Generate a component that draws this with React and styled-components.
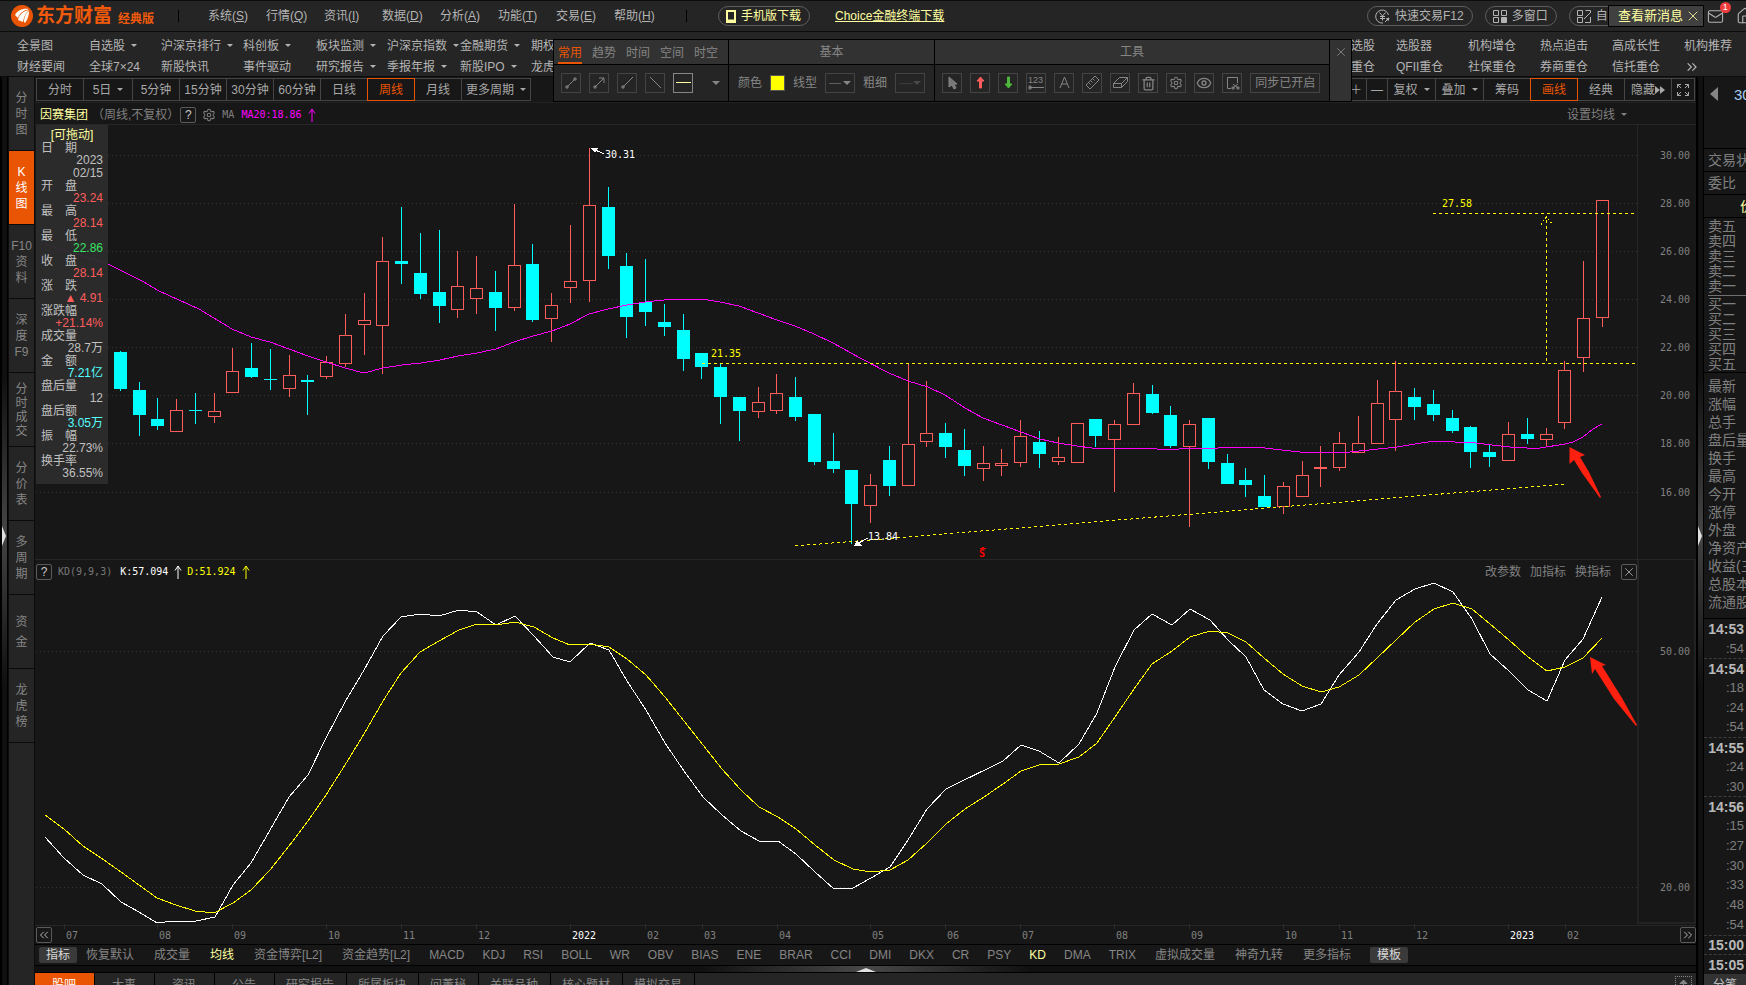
import React from 'react'
import styled, { createGlobalStyle } from 'styled-components'
import { Trash2, Settings, Eye, Mail, Home, X, ChevronsLeft, ChevronsRight } from 'lucide-react'

const menus = ['系统(S)', '行情(Q)', '资讯(I)', '数据(D)', '分析(A)', '功能(T)', '交易(E)', '帮助(H)']

const navLeft = [
  ['全景图', '自选股▾', '沪深京排行▾', '科创板▾', '板块监测▾', '沪深京指数▾', '金融期货▾', '期权'],
  ['财经要闻', '全球7×24', '新股快讯', '事件驱动', '研究报告▾', '季报年报▾', '新股IPO▾', '龙虎'],
]

const navRight = [
  ['选股', '选股器', '机构增仓', '热点追击', '高成长性', '机构推荐'],
  ['重仓', 'QFII重仓', '社保重仓', '券商重仓', '信托重仓', '>>'],
]

const sideTabs = [
  ['分', '时', '图'], ['K', '线', '图'], ['F10', '资', '料'], ['深', '度', 'F9'],
  ['分', '时', '成', '交'], ['分', '价', '表'], ['多', '周', '期'], ['资', '金'], ['龙', '虎', '榜'],
]

const periods = ['分时', '5日▾', '5分钟', '15分钟', '30分钟', '60分钟', '日线', '周线', '月线']

const info = [
  ['日期', '2023 02/15', '#c0c0c0'],
  ['开盘', '23.24', '#ff5c5c'],
  ['最高', '28.14', '#ff5c5c'],
  ['最低', '22.86', '#39e365'],
  ['收盘', '28.14', '#ff5c5c'],
  ['涨跌', '▲ 4.91', '#ff5c5c'],
  ['涨跌幅', '+21.14%', '#ff5c5c'],
  ['成交量', '28.7万', '#c0c0c0'],
  ['金额', '7.21亿', '#54ffff'],
  ['盘后量', '12', '#c0c0c0'],
  ['盘后额', '3.05万', '#54ffff'],
  ['振幅', '22.73%', '#c0c0c0'],
  ['换手率', '36.55%', '#c0c0c0'],
]

const indicators = [
  '恢复默认', '成交量', '均线', '资金博弈[L2]', '资金趋势[L2]', 'MACD', 'KDJ', 'RSI', 'BOLL', 'WR', 'OBV', 'BIAS',
  'ENE', 'BRAR', 'CCI', 'DMI', 'DKX', 'CR', 'PSY', 'KD', 'DMA', 'TRIX', '虚拟成交量', '神奇九转', '更多指标',
]

const bottomTabs = ['股吧', '大事', '资讯', '公告', '研究报告', '所属板块', '问董秘', '关联品种', '核心题材', '模拟交易']

const sells = ['卖五', '卖四', '卖三', '卖二', '卖一']
const buys = ['买一', '买二', '买三', '买四', '买五']
const stats = ['最新', '涨幅', '总手', '盘后量', '换手', '最高', '今开', '涨停', '外盘', '净资产', '收益(三)', '总股本', '流通股']

const ticks = [
  '14:53', ':54', '14:54', ':18', ':24', ':54', '14:55', ':24', ':30', '14:56',
  ':15', ':27', ':30', ':33', ':48', ':54', '15:00', '15:05',
]

// [up, high, top, bottom, low], one for each week, starting at FIRST
const FIRST = 4
const candles = [
  [0, 351, 352, 389, 391], [0, 382, 390, 415, 436], [0, 398, 419, 426, 430], [1, 399, 410, 432, 432],
  [0, 393, 410, 411, 424], [1, 393, 411, 417, 423], [1, 348, 371, 393, 393], [0, 343, 368, 377, 378],
  [0, 349, 379, 380, 390], [1, 355, 375, 389, 397], [0, 375, 380, 382, 415], [1, 356, 362, 377, 379],
  [1, 314, 335, 364, 367], [1, 293, 320, 325, 355], [1, 237, 261, 326, 374], [0, 207, 261, 264, 284],
  [0, 233, 273, 294, 299], [0, 230, 292, 306, 323], [1, 251, 286, 310, 318], [1, 256, 288, 299, 314],
  [0, 271, 292, 308, 331], [1, 204, 265, 308, 311], [0, 244, 264, 320, 322], [1, 293, 305, 319, 342],
  [1, 225, 281, 288, 303], [1, 148, 205, 281, 302], [0, 187, 207, 256, 269], [0, 253, 266, 317, 338],
  [0, 259, 302, 312, 326], [0, 304, 322, 327, 336], [0, 314, 330, 359, 371], [0, 353, 353, 367, 379],
  [0, 363, 367, 397, 424], [0, 397, 397, 411, 441], [1, 387, 402, 412, 418], [1, 374, 393, 411, 414],
  [0, 377, 397, 417, 421], [0, 414, 414, 462, 465], [0, 433, 461, 469, 473], [0, 470, 470, 504, 544],
  [1, 474, 485, 506, 523], [0, 446, 460, 486, 496], [1, 363, 444, 486, 486], [1, 381, 433, 442, 447],
  [0, 423, 433, 447, 458], [0, 429, 450, 466, 476], [1, 446, 463, 469, 481], [1, 449, 463, 466, 476],
  [1, 420, 436, 463, 467], [0, 431, 442, 454, 468], [1, 437, 457, 462, 465], [1, 423, 423, 463, 463],
  [0, 419, 419, 436, 447], [1, 420, 424, 440, 492], [1, 383, 393, 425, 425], [0, 385, 394, 413, 414],
  [0, 406, 415, 446, 448], [1, 420, 424, 447, 527], [0, 418, 418, 462, 469], [0, 454, 463, 484, 484],
  [0, 468, 480, 485, 497], [0, 475, 496, 507, 507], [1, 482, 486, 507, 514], [1, 461, 475, 497, 497],
  [1, 446, 467, 469, 487], [1, 432, 443, 468, 471], [1, 416, 443, 453, 453], [1, 380, 403, 444, 444],
  [1, 361, 391, 420, 451], [0, 388, 397, 407, 420], [0, 390, 404, 415, 421], [0, 410, 418, 431, 433],
  [0, 426, 427, 452, 468], [0, 444, 452, 457, 467], [1, 422, 434, 461, 461], [0, 418, 434, 439, 444],
  [1, 428, 434, 440, 447], [1, 361, 370, 423, 429], [1, 261, 318, 358, 372], [1, 200, 200, 318, 327],
]

const ma20 = '45,244 108,264 142,281 159,291 199,309 232,329 251,337 270,342 289,349 308,356 326,362 345,368 364,373 383,368 402,365 421,363 440,360 458,356 477,353 496,349 514,342 533,336 552,331 570,324 589,314 608,309 627,305 645,302 664,300 683,299 702,299 720,302 739,306 758,313 777,320 795,326 814,334 833,343 860,358 889,373 908,381 928,387 945,395 965,408 983,418 1002,425 1021,432 1040,439 1058,443 1077,446 1092,448 1143,448 1170,450 1189,448 1218,448 1227,447 1256,447 1282,450 1300,452 1319,453 1350,452 1369,450 1397,447 1415,444 1434,441 1476,443 1492,445 1510,447 1527,448 1540,448 1565,444 1573,442 1583,437 1593,429 1602,424'

const kLine = '45,837 64,858 83,875 102,884 121,902 139,912 157,923 173,921 196,921 215,917 233,885 251,863 270,830 289,797 308,775 326,738 345,702 364,670 383,636 401,617 420,614 439,616 459,610 477,612 496,625 515,616 534,636 553,657 570,662 590,643 609,650 627,681 646,710 665,743 684,771 703,797 722,815 741,831 759,841 778,841 796,854 815,872 834,889 853,888 871,878 890,867 908,840 927,809 946,789 1003,761 1021,745 1039,751 1059,763 1079,744 1097,713 1115,667 1134,630 1152,614 1172,625 1190,609 1210,620 1228,640 1246,657 1264,690 1283,704 1302,711 1321,704 1339,675 1359,652 1377,624 1396,600 1415,589 1434,583 1453,592 1472,619 1490,654 1509,671 1528,690 1547,701 1565,660 1583,639 1602,597'

const dLine = '45,815 64,829 83,846 104,860 121,872 139,885 157,898 176,905 195,911 214,913 233,903 251,890 270,870 289,846 308,821 326,795 345,765 364,734 383,701 401,673 420,652 439,641 459,630 477,624 496,625 515,622 534,627 553,638 570,645 590,644 609,647 627,659 646,675 665,697 684,721 703,745 722,769 741,790 759,807 778,817 796,829 815,845 834,860 853,869 871,872 890,870 908,860 927,843 946,824 965,809 984,797 1003,784 1021,771 1039,765 1059,764 1079,757 1097,743 1115,717 1134,689 1152,664 1172,651 1190,637 1210,631 1228,633 1246,642 1264,658 1283,674 1302,686 1321,692 1339,687 1359,675 1377,658 1396,640 1415,622 1434,609 1453,603 1472,609 1490,624 1509,640 1528,657 1547,671 1565,667 1583,658 1602,638'

const months = [
  [64, '07'], [157, '08'], [232, '09'], [326, '10'], [401, '11'], [476, '12'], [570, '2022'], [645, '02'],
  [702, '03'], [777, '04'], [870, '05'], [945, '06'], [1020, '07'], [1114, '08'], [1189, '09'], [1283, '10'],
  [1339, '11'], [1414, '12'], [1508, '2023'], [1565, '02'],
]

const priceGrid = [[155, '30.00'], [203, '28.00'], [251, '26.00'], [299, '24.00'], [347, '22.00'], [395, '20.00'], [443, '18.00'], [492, '16.00']]

const Label = ({ text }) => (
  text.endsWith('▾') ? <>{text.slice(0, -1)}<Caret /></> : text
)

const TopMenu = () => (
  <TopBar>
    <Logo>
      <svg width="22" height="22" viewBox="0 0 22 22">
        <circle cx="11" cy="11" r="11" fill="#ea5504" />
        <path d="M4 10 C6 6 11 3 18 4 C14 5 9 7 7 13 Z" fill="#fff" />
        <path d="M7 15 C8 10 12 6 18 5 C15 8 13 11 12 17 Z" fill="#fff" />
        <path d="M13 17 C13 12 15 8 18 6 C18 10 17 14 14 18 Z" fill="#fff" />
      </svg>
      <b>东方财富</b>
      <small>经典版</small>
    </Logo>
    <Bar />
    <Menus>
      {menus.map((m) => (
        <button key={m}>{m.slice(0, 3)}<u>{m[3]}</u>)</button>
      ))}
    </Menus>
    <Bar />
    <Pill $gold>
      <svg width="10" height="13" viewBox="0 0 10 13" fill="none" stroke="currentColor" strokeWidth="2">
        <path d="M1 1H9V12H1Z M1 10.5H9" />
      </svg>
      手机版下载
    </Pill>
    <ChoiceLink href="#choice">Choice金融终端下载</ChoiceLink>
    <TopRight>
      <Pill>
        <svg width="15" height="15" viewBox="0 0 15 15" fill="none" stroke="currentColor">
          <path d="M13.5 6A6.5 6.5 0 1 0 8 14M4.500 3.500L7.500 7L10.500 3.500M7.500 7V11.500M5 7.500H10M5 9.500H10M10 13L14 9M11 10L14 9L13 12" />
        </svg>
        快速交易F12
      </Pill>
      <Pill>
        <svg width="14" height="13" viewBox="0 0 14 13" fill="none" stroke="currentColor">
          <path d="M.5 .5H5.500V5.500H.5ZM8.500 .5H13.500V5.500H8.500ZM.5 7.500H5.500V12.500H.5Z" />
          <path d="M8.500 7.500H13.500V12.500H8.500Z" fill="currentColor" />
        </svg>
        多窗口
      </Pill>
      <Pill>
        <svg width="14" height="13" viewBox="0 0 14 13" fill="none" stroke="currentColor">
          <path d="M.5 .5H5.500V5.500H.5ZM8.500 .5H13.500V3M.5 7.500H5.500V12.500H.5ZM7 9L13 3M8 12.500H13.500V7" />
        </svg>
        自定义
      </Pill>
      <News>
        查看新消息
        <button aria-label="关闭消息"><X size={16} strokeWidth={1.25} /></button>
      </News>
      <IconButton aria-label="邮件">
        <Mail size={17} strokeWidth={1.5} />
        <Badge>1</Badge>
      </IconButton>
      <IconButton aria-label="主页"><Home size={18} strokeWidth={1.5} /></IconButton>
    </TopRight>
  </TopBar>
)

const icons = {
  segment: <path d="M5 14L13 6M4 13H6V15H4ZM12 5H14V7H12Z" />,
  arrow: <path d="M5 14L14 5M9 5H14V10M4 13H6V15H4Z" />,
  ray: <path d="M5 14L15 4M4 13H6V15H4Z" />,
  line: <path d="M4 4L15 15" />,
  flat: <path d="M2 9.500H17" stroke="#ffffa0" />,
  pointer: <path d="M6 4V14L9 12L11 16L13 15L11 11H14Z" fill="#777" />,
  up: <path d="M9.500 4L13 8H10.500V15H8.500V8H6Z" fill="#ff5c5c" stroke="#ff5c5c" />,
  down: <path d="M9.500 15L13 11H10.500V4H8.500V11H6Z" fill="#4fb83c" stroke="#4fb83c" />,
  count: <><path d="M2 14.500H17M2 13H4V16H2Z" /><text x="1" y="10" fontSize="9" stroke="none" fill="currentColor">123</text></>,
  text: <path d="M5 15L9.500 4L14 15M7 11H12" />,
  ruler: <path d="M3 12L12 3L16 7L7 16ZM5.500 9.500L7.500 11.500M7.500 7.500L9.500 9.500M9.500 5.500L11.500 7.500" />,
  eraser: <path d="M2.500 10.500L8.500 4.500H16.500L10.500 10.500ZM2.500 10.500V14.500H10.500L16.500 8.500V4.500M10.500 10.500V14.500" />,
  crop: <path d="M8 15.500H4.500V4.500H14.500V10M10 11L15 15M15 11L10 15M9 14H11V16H9ZM14 14H16V16H14Z" />,
}

const DrawPanel = () => (
  <DrawBox>
    <DrawGroup>
      <DrawTabs>
        {['常用', '趋势', '时间', '空间', '时空'].map((t, i) => (
          <DrawTab key={t} $on={i === 0}>{t}</DrawTab>
        ))}
      </DrawTabs>
      <ToolRow>
        {['segment', 'arrow', 'ray', 'line', 'flat'].map((t) => (
          <Tool key={t} aria-label={t} $on={t === 'flat'}>
            <svg width="20" height="20" fill="none" stroke="currentColor">{icons[t]}</svg>
          </Tool>
        ))}
        <MoreTools aria-label="更多"><Caret $big /></MoreTools>
      </ToolRow>
    </DrawGroup>
    <DrawGroup>
      <DrawTitle>基本</DrawTitle>
      <Basics>
        <label htmlFor="color">颜色</label>
        <input id="color" type="color" defaultValue="#ffff00" />
        <label htmlFor="dash">线型</label>
        <SelectBox><select id="dash"><option>┄┄</option></select><Caret $big /></SelectBox>
        <label htmlFor="weight">粗细</label>
        <SelectBox $off><select id="weight" disabled><option>──</option></select><Caret $big /></SelectBox>
      </Basics>
    </DrawGroup>
    <DrawGroup $grow>
      <DrawTitle>工具</DrawTitle>
      <ToolRow>
        {['pointer', 'up', 'down', 'count', 'text', 'ruler', 'eraser'].map((t) => (
          <Tool key={t} aria-label={t}>
            <svg width="20" height="20" fill="none" stroke="currentColor">{icons[t]}</svg>
          </Tool>
        ))}
        <Tool aria-label="删除"><Trash2 size={15} strokeWidth={2} /></Tool>
        <Tool aria-label="设置"><Settings size={14} strokeWidth={1.75} /></Tool>
        <Tool aria-label="显示"><Eye size={16} strokeWidth={2} /></Tool>
        <Tool aria-label="截图">
          <svg width="20" height="20" fill="none" stroke="currentColor">{icons.crop}</svg>
        </Tool>
        <SyncButton>同步已开启</SyncButton>
      </ToolRow>
    </DrawGroup>
    <DrawClose aria-label="关闭画线"><X size={14} strokeWidth={1.5} /></DrawClose>
  </DrawBox>
)

const PriceChart = () => (
  <Chart viewBox="35 125 1661 434">
    {priceGrid.map(([y, v]) => (
      <g key={v}>
        <path d={`M36 ${y}.5H1640`} stroke="#343434" strokeDasharray="1 3" />
        <text x="1660" y={y + 4} fill="#808080">{v}</text>
      </g>
    ))}
    <path d="M1637.500 125V559" stroke="#262626" />
    {candles.map(([up, high, top, bottom, low], i) => {
      const x = Math.floor(45.2 + (i + FIRST) * 18.76)
      const color = up ? '#ff5c5c' : '#00ffff'
      return (
        <g key={i} fill={color}>
          <rect x={x} y={high} width="1" height={top - high} />
          <rect x={x} y={bottom} width="1" height={low - bottom} />
          {up
            ? <rect x={x - 5.5} y={top + 0.5} width="12" height={bottom - top - 1} fill="none" stroke={color} />
            : <rect x={x - 6} y={top} width="13" height={bottom - top} />}
        </g>
      )
    })}
    <polyline points={ma20} stroke="#ff00ff" fill="none" />
    <g stroke="#ffff00" fill="none" strokeDasharray="3 3">
      <path d="M702 363.500H1635M1433 213.500H1635M1546.500 361V217M795 546L1566 484" />
    </g>
    <path d="M1541.500 225V223L1546.500 217L1551.500 223V225" stroke="#ffff00" fill="none" strokeDasharray="2 2" />
    <g stroke="#ffffff" fill="#ffffff">
      <path d="M591 148L604 154M591 148L598 148L595 152Z" />
      <path d="M855 545L868 538M855 545L857 541L861 545Z" />
    </g>
    <text x="605" y="158" fill="#ffffff">30.31</text>
    <text x="868" y="540" fill="#ffffff">13.84</text>
    <text x="711" y="357" fill="#ffff00">21.35</text>
    <text x="1442" y="207" fill="#ffff00">27.58</text>
    <text x="979" y="557" fill="#ff0000" fontWeight="bold">S</text>
    <path d="M980 548.500H986M982 547.500H984" stroke="#ff0000" />
    <RedArrow d="M1569.500 447L1585 455L1580 457L1589 472L1601 497L1600 498L1582 473L1574 460L1569.500 464Z" />
  </Chart>
)

const KdChart = () => (
  <Chart viewBox="35 584 1661 341">
    {[[651, '50.00'], [887, '20.00']].map(([y, v]) => (
      <g key={v}>
        <path d={`M36 ${y}.5H1640`} stroke="#343434" strokeDasharray="1 3" />
        <text x="1660" y={y + 4} fill="#808080">{v}</text>
      </g>
    ))}
    <path d="M1638 560V923H1695V560" stroke="#222222" strokeWidth="2" fill="none" />
    <polyline points={kLine} stroke="#ffffff" fill="none" />
    <polyline points={dLine} stroke="#ffff00" fill="none" />
    <RedArrow d="M1590 657L1606 665L1602 666L1622 698L1637 725L1636 726L1614 699L1595 669L1592 674Z" />
  </Chart>
)

const UpMark = () => (
  <svg width="8" height="14" viewBox="0 0 8 14" fill="none" stroke="currentColor">
    <path d="M4 1V14M1 5.500L4 1L7 5.500" />
  </svg>
)

const App = () => {
  return (
    <Page>
      <GlobalStyle />
      <TopMenu />
      <NavBar>
        <NavGrid>
          {navLeft.flat().map((n) => <button key={n}><Label text={n} /></button>)}
        </NavGrid>
        <NavGridRight>
          {navRight.flat().map((n) => <button key={n}>{n === '>>' ? <ChevronsRight size={16} strokeWidth={1.75} /> : n}</button>)}
        </NavGridRight>
        <DrawPanel />
      </NavBar>
      <Body>
        <Splitter><i /></Splitter>
        <SideBar>
          {sideTabs.map((t, i) => (
            <SideTab key={t.join('')} $on={i === 1} $count={t.length}>
              {t.map((c, n) => <span key={n}>{c}</span>)}
            </SideTab>
          ))}
        </SideBar>
        <Main>
          <PeriodBar>
            {periods.map((p) => (
              <Period key={p} $on={p === '周线'} $w={p === '5日▾' ? 50 : 48}><Label text={p} /></Period>
            ))}
            <Period $w={70}><Label text="更多周期▾" /></Period>
            <Spacer />
            <Period $w={22}>＋</Period>
            <Period $w={22}>—</Period>
            <Period $w={49}><Label text="复权▾" /></Period>
            <Period $w={49}><Label text="叠加▾" /></Period>
            <Period>筹码</Period>
            <Period $on>画线</Period>
            <Period>经典</Period>
            <Period>
              隐藏
              <svg width="10" height="8" fill="currentColor"><path d="M0 0L5 4L0 8ZM5 0L10 4L5 8Z" /></svg>
            </Period>
            <Period $w={24} aria-label="全屏">
              <svg width="14" height="14" fill="none" stroke="currentColor">
                <path d="M1.500 5V1.500H5M1.500 1.500L5 5M9 1.500H12.500V5M12.500 1.500L9 5M1.500 9V12.500H5M1.500 12.500L5 9M9 12.500H12.500V9M12.500 12.500L9 9" />
              </svg>
            </Period>
          </PeriodBar>
          <TitleRow>
            <strong>因赛集团</strong>
            <span>（周线,不复权）</span>
            <HelpButton>?</HelpButton>
            <Settings size={14} strokeWidth={1.75} />
            <Mono>MA</Mono>
            <Mono $color="#ff00ff">MA20:18.86 <UpMark /></Mono>
            <Spacer />
            <button>设置均线<Caret /></button>
          </TitleRow>
          <ChartWrap>
            <PriceChart />
            <InfoBox>
              <h4>[可拖动]</h4>
              {info.map(([name, value, color]) => (
                <InfoItem key={name} $color={color}>
                  <dt>{name.split('').map((c) => <span key={c}>{c}</span>)}</dt>
                  <dd>{value}</dd>
                </InfoItem>
              ))}
            </InfoBox>
          </ChartWrap>
          <KdHead>
            <HelpButton>?</HelpButton>
            <Mono $color="#777777">KD(9,9,3)</Mono>
            <Mono $color="#ffffff">K:57.094 <UpMark /></Mono>
            <Mono $color="#ffff00">D:51.924 <UpMark /></Mono>
            <Spacer />
            <button>改参数</button>
            <button>加指标</button>
            <button>换指标</button>
            <HelpButton aria-label="关闭指标"><X size={14} strokeWidth={1.25} /></HelpButton>
          </KdHead>
          <KdChart />
          <TimeAxis>
            <HelpButton aria-label="向前"><ChevronsLeft size={16} strokeWidth={1.5} /></HelpButton>
            <Chart viewBox="52 925 1627 19">
              {months.map(([x, m]) => (
                <g key={x}>
                  <path d={`M${x}.5 923V928`} stroke="#2c2c2c" />
                  <text x={x + 2} y="938" fill={m.length > 2 ? '#ffffff' : '#808080'}>{m}</text>
                </g>
              ))}
            </Chart>
            <HelpButton aria-label="向后"><ChevronsRight size={16} strokeWidth={1.5} /></HelpButton>
          </TimeAxis>
          <Indicators>
            <ChipButton>指标</ChipButton>
            {indicators.map((n) => (
              <Indicator key={n} $on={n === '均线' || n === 'KD'} $latin={/^[A-Z]/.test(n)}>{n}</Indicator>
            ))}
            <ChipButton>模板</ChipButton>
          </Indicators>
          <BottomSplitter><i /></BottomSplitter>
          <BottomBar>
            {bottomTabs.map((t, i) => <BottomTab key={t} $on={i === 0}>{t}</BottomTab>)}
            <Spacer />
            <DockButton aria-label="展开">
              <svg width="17" height="16" viewBox="0 0 17 16" fill="none" stroke="currentColor">
                <path d="M0 .5H17M.5 0V16M16.500 0V16" strokeDasharray="1 1" />
                <path d="M8.500 4V12M5 7.500L8.500 4L12 7.500Z" fill="currentColor" />
              </svg>
            </DockButton>
          </BottomBar>
        </Main>
        <Splitter><i /></Splitter>
        <Quote>
          <QuoteHead><i /><span>300781</span></QuoteHead>
          <QuoteLine>交易状态</QuoteLine>
          <QuoteLine>委比</QuoteLine>
          <QuoteLine $price>价格</QuoteLine>
          <Levels>
            {sells.map((s) => <div key={s}>{s}</div>)}
            <hr />
            {buys.map((s) => <div key={s}>{s}</div>)}
          </Levels>
          <Stats>{stats.map((s) => <div key={s}>{s}</div>)}</Stats>
          <Ticks>
            {ticks.map((t, i) => <Tick key={i} $head={t.length > 3} $first={i === 0}>{t}</Tick>)}
          </Ticks>
          <QuoteTab>分笔</QuoteTab>
        </Quote>
      </Body>
    </Page>
  )
}

const GlobalStyle = createGlobalStyle`
  * {
    box-sizing: border-box;
  }

  body {
    margin: 0;
    background: #171717;
    color: #b4b4b4;
    font: 12px/16px "Liberation Sans", "Noto Sans CJK SC", sans-serif;
  }

  button {
    display: inline-flex;
    align-items: center;
    padding: 0;
    border: 0;
    background: none;
    color: inherit;
    font: inherit;
    white-space: nowrap;
    flex-shrink: 0;
    cursor: pointer;
  }
`

const Page = styled.div`
  display: flex;
  flex-direction: column;
  height: 100vh;
  overflow: hidden;
`

const Spacer = styled.div`
  flex: 1;
`

const Caret = styled.i`
  flex-shrink: 0;
  margin-left: ${({ $big }) => ($big ? 0 : 6)}px;
  border: ${({ $big }) => ($big ? 4 : 3)}px solid transparent;
  border-top-color: currentColor;
  border-bottom: 0;
`

const TopBar = styled.header`
  display: flex;
  align-items: center;
  height: 32px;
  padding-left: 11px;
  background: #252525;
  border-top: 1px solid #0c0c0c;
  border-bottom: 1px solid #0c0c0c;
`

const Logo = styled.div`
  display: flex;
  align-items: center;
  width: 167px;
  color: #f05a0a;

  b {
    margin-left: 3px;
    font-size: 19px;
  }

  small {
    margin: 6px 0 0 6px;
    font-size: 12px;
    font-weight: bold;
  }
`

const Bar = styled.i`
  width: 1px;
  height: 12px;
  background: #000000;
`

const Menus = styled.nav`
  display: grid;
  grid-template-columns: repeat(8, 58px);
  width: 507px;
  padding-left: 29px;
`

const Pill = styled.button`
  gap: 5px;
  height: 20px;
  margin-left: ${({ $gold }) => ($gold ? 31 : 0)}px;
  padding: 0 8px 0 7px;
  border: 1px solid #5c5c5c;
  border-radius: 10px;
  color: ${({ $gold }) => ($gold ? '#ffffa0' : '#b4b4b4')};
`

const ChoiceLink = styled.a`
  margin-left: 25px;
  color: #ffffa0;
`

const TopRight = styled.div`
  position: relative;
  display: flex;
  align-items: center;
  gap: 12px;
  width: 379px;
  margin-left: auto;
`

const News = styled.div`
  position: absolute;
  left: 241px;
  display: flex;
  align-items: center;
  justify-content: space-between;
  width: 96px;
  height: 22px;
  padding: 0 2px 0 9px;
  background: #404040;
  border: 1px solid #000000;
  color: #ffffa0;
  font-size: 13px;
`

const IconButton = styled.button`
  position: relative;
  margin-left: 54px;

  & + & {
    margin-left: 0;
  }
`

const Badge = styled.span`
  position: absolute;
  top: -6px;
  right: -7px;
  width: 11px;
  border-radius: 6px;
  background: #f03c3c;
  color: #ffffff;
  font-size: 9px;
  line-height: 11px;
`

const NavBar = styled.div`
  position: relative;
  display: flex;
  justify-content: space-between;
  height: 45px;
  padding-top: 3px;
  background: #252525;
  border-bottom: 1px solid #0c0c0c;
`

const NavGrid = styled.div`
  display: grid;
  grid-template-columns: 72px 72px 82px 73px 71px 73px 71px 40px;
  grid-auto-rows: 21px;
  padding-left: 17px;
`

const NavGridRight = styled.div`
  display: grid;
  grid-template-columns: 45px 72px 72px 72px 72px 62px;
  grid-auto-rows: 21px;
`

const DrawBox = styled.section`
  position: absolute;
  z-index: 2;
  top: 7px;
  right: 394px;
  display: flex;
  width: 799px;
  height: 63px;
  border: 1px solid #000000;
  background: #252525;
  color: #858585;
`

const DrawGroup = styled.div`
  flex: ${({ $grow }) => ($grow ? '1' : 'none')};
  border-right: 1px solid #000000;
`

const DrawTabs = styled.div`
  display: flex;
  gap: 10px;
  height: 25px;
  padding: 0 10px 0 4px;
  background: #323232;
  border-bottom: 1px solid #000000;
`

const DrawTab = styled.button`
  height: 24px;
  padding-top: 3px;
  border-bottom: 2px solid ${({ $on }) => ($on ? '#ea5504' : 'transparent')};
  color: ${({ $on }) => ($on ? '#ea5504' : '#858585')};
`

const DrawTitle = styled.div`
  height: 25px;
  background: #323232;
  border-bottom: 1px solid #000000;
  line-height: 25px;
  text-align: center;
`

const ToolRow = styled.div`
  display: flex;
  align-items: center;
  gap: 8px;
  height: 36px;
  padding: 0 8px 0 7px;
`

const Tool = styled.button`
  justify-content: center;
  width: 20px;
  height: 20px;
  border: 1px solid ${({ $on }) => ($on ? '#858585' : '#444444')};
`

const MoreTools = styled.button`
  margin-left: 11px;
`

const SyncButton = styled.button`
  height: 20px;
  padding: 0 4px;
  border: 1px solid #444444;
`

const Basics = styled.div`
  display: flex;
  align-items: center;
  gap: 8px;
  height: 36px;
  padding: 0 9px;

  input {
    width: 15px;
    height: 16px;
    padding: 0;
    border: 1px solid #555555;
    background: #ffff00;
    appearance: none;
  }

  input::-webkit-color-swatch-wrapper {
    padding: 0;
  }

  input::-webkit-color-swatch {
    border: 0;
  }
`

const SelectBox = styled.div`
  display: flex;
  align-items: center;
  width: 30px;
  height: 20px;
  padding: 0 3px;
  border: 1px solid #444444;
  color: ${({ $off }) => ($off ? '#484848' : '#858585')};

  select {
    width: 14px;
    padding: 0;
    border: 0;
    background: none;
    color: inherit;
    font-size: 10px;
    appearance: none;
    opacity: 1;
  }
`

const DrawClose = styled.button`
  align-items: flex-start;
  justify-content: center;
  width: 21px;
  padding-top: 5px;
  background: #323232;
`

const Body = styled.div`
  display: flex;
  flex: 1;
  min-height: 0;
`

const Splitter = styled.div`
  display: flex;
  align-items: center;
  flex: none;
  width: 8px;
  padding-top: 10px;
  border: solid #000000;
  border-width: 0 1px 0 2px;
  background: linear-gradient(#101010 33%, #444444 50%, #101010 67%);

  i {
    border: 10px solid transparent;
    border-width: 10px 0 10px 4px;
    border-left-color: #e0e0e0;
  }
`

const SideBar = styled.nav`
  flex: none;
  width: 27px;
  background: #252525;
  border: solid #0c0c0c;
  border-width: 0 1px;
`

const SideTab = styled.button`
  display: flex;
  flex-direction: column;
  justify-content: center;
  width: 25px;
  height: 74px;
  padding-top: 1px;
  border-bottom: 1px solid #0a0a0a;
  background: ${({ $on }) => ($on ? '#ea5504' : 'none')};
  color: ${({ $on }) => ($on ? '#ffffff' : '#858585')};
  line-height: ${({ $count }) => ({ 2: 20, 3: 16, 4: 14 })[$count]}px;
`

const Main = styled.main`
  display: flex;
  flex: 1;
  flex-direction: column;
  min-width: 0;
`

const PeriodBar = styled.div`
  display: flex;
  flex: none;
  height: 25px;
  padding: 1px 1px 1px 2px;
`

const Period = styled.button`
  position: relative;
  z-index: ${({ $on }) => ($on ? 1 : 0)};
  justify-content: center;
  width: ${({ $w }) => $w || 48}px;
  margin-left: -1px;
  border: 1px solid ${({ $on }) => ($on ? '#ea5504' : '#454545')};
  color: ${({ $on }) => ($on ? '#ea5504' : '#a8a8a8')};
`

const TitleRow = styled.div`
  display: flex;
  align-items: center;
  flex: none;
  height: 23px;
  padding: 2px 69px 0 5px;
  border-top: 1px solid #222222;
  border-bottom: 1px solid #262626;
  color: #808080;

  strong {
    width: 52px;
    color: #ffffa0;
    font-weight: normal;
  }

  > svg {
    margin: 0 6px;
  }
`

const HelpButton = styled.button`
  justify-content: center;
  width: 16px;
  height: 16px;
  margin-left: 1px;
  border: 1px solid #5a5a5a;
  border-radius: 2px;
  color: #c8c8c8;
`

const Mono = styled.span`
  display: inline-flex;
  align-items: center;
  gap: 6px;
  margin-right: 7px;
  color: ${({ $color }) => $color || '#808080'};
  font: 10px/16px "DejaVu Sans Mono", monospace;
`

const ChartWrap = styled.div`
  position: relative;
  flex: none;
`

const Chart = styled.svg`
  display: block;
  flex: 1 0 auto;
  width: 100%;
  min-width: 0;
  overflow: visible;
  shape-rendering: crispEdges;

  text {
    font-family: "DejaVu Sans Mono", monospace;
    font-size: 10px;
  }
`

const RedArrow = styled.path`
  fill: #ff2010;
  shape-rendering: auto;
`

const InfoBox = styled.dl`
  position: absolute;
  top: 0;
  left: 1px;
  width: 72px;
  margin: 0;
  padding: 4px 5px;
  background: rgba(45, 45, 45, 0.94);

  h4 {
    margin: 0;
    color: #ffffa0;
    font-weight: normal;
    line-height: 13px;
    text-align: center;
  }
`

const InfoItem = styled.div`
  dt {
    display: flex;
    justify-content: space-between;
    width: 36px;
    line-height: 12px;
    color: #c0c0c0;
  }

  dd {
    margin: 0 0 0 10px;
    color: ${({ $color }) => $color};
    line-height: 13px;
    text-align: right;
  }
`

const KdHead = styled.div`
  display: flex;
  align-items: center;
  flex: none;
  height: 25px;
  padding: 0 59px 0 0;
  border-top: 1px solid #262626;
  color: #808080;

  ${Mono} {
    margin-right: 5px;
  }

  ${Mono}:nth-child(2) {
    margin: 0 8px 0 6px;
  }

  > button:not(${HelpButton}) {
    margin-right: 9px;
  }
`

const TimeAxis = styled.div`
  display: flex;
  align-items: center;
  flex: none;
  height: 19px;
  border-top: 1px solid #262626;

  > svg {
    flex: 1;
  }
`

const Indicators = styled.div`
  display: flex;
  align-items: center;
  justify-content: flex-start;
  gap: 18px;
  flex: none;
  height: 22px;
  padding-left: 4px;
  border-top: 1px solid #000000;
  border-bottom: 1px solid #000000;
`

const Indicator = styled.button`
  padding: 0 ${({ $latin }) => ($latin ? 0 : 1)}px;
  color: ${({ $on }) => ($on ? '#ffffa0' : '#858585')};
`

const ChipButton = styled.button`
  height: 16px;
  padding: 0 7px;
  border-radius: 2px;
  background: #3a3a3a;
  color: #d8d8d8;

  &:first-child {
    margin-right: -10px;
  }
`

const BottomSplitter = styled.div`
  display: flex;
  align-items: flex-end;
  justify-content: center;
  flex: none;
  height: 6px;
  background: linear-gradient(90deg, #101010 40%, #484848 50%, #101010 60%);

  i {
    border: solid transparent;
    border-width: 0 10px 4px;
    border-bottom-color: #e0e0e0;
  }
`

const BottomBar = styled.div`
  display: flex;
  flex: none;
  height: 24px;
  border-top: 1px solid #000000;
  background: #252525;
  color: #858585;
`

const BottomTab = styled.button`
  height: 24px;
  justify-content: center;
  min-width: 60px;
  padding: 0 12px 0 11px;
  border-right: 1px solid #000000;
  background: ${({ $on }) => ($on ? '#ea5504' : 'none')};
  color: ${({ $on }) => ($on ? '#ffffff' : '#858585')};
`

const DockButton = styled.button`
  align-items: flex-start;
  padding: 3px 4px;
`

const Quote = styled.aside`
  display: flex;
  flex: none;
  flex-direction: column;
  width: 42px;
  overflow: hidden;
  color: #808080;
  font-size: 14px;
  white-space: nowrap;
`

const QuoteHead = styled.div`
  display: flex;
  align-items: flex-start;
  flex: none;
  height: 72px;
  padding: 10px 0 0 6px;
  border-bottom: 1px solid #000000;
  color: #a8cdf0;
  font-size: 15px;

  i {
    margin-right: 16px;
    border: solid transparent;
    border-width: 7px 8px 7px 0;
    border-right-color: #858585;
  }
`

const QuoteLine = styled.div`
  flex: none;
  height: 23px;
  padding-left: ${({ $price }) => ($price ? 36 : 4)}px;
  border-bottom: 1px solid #000000;
  color: ${({ $price }) => ($price ? '#ffffa0' : '#808080')};
  line-height: 22px;
`

const Levels = styled.div`
  flex: none;
  padding: 1px 0 0 4px;
  line-height: 15px;
  border-bottom: 1px solid #000000;

  hr {
    margin: 1px 0;
    border: 0;
    border-top: 1px solid #707070;
  }
`

const Stats = styled.div`
  flex: none;
  height: 246px;
  padding: 4px 0 0 4px;
  border-bottom: 1px solid #000000;
  line-height: 18px;
`

const Ticks = styled.div`
  display: grid;
  flex: 1;
  grid-auto-rows: 1fr;
  min-height: 0;
`

const Tick = styled.div`
  display: flex;
  align-items: center;
  justify-content: flex-end;
  min-height: 0;
  padding-right: 2px;
  border-top: ${({ $head, $first }) => ($head && !$first ? '1px dashed #3c3c3c' : '0')};
  color: ${({ $head }) => ($head ? '#b8b8b8' : '#808080')};
  font-size: ${({ $head }) => ($head ? 14 : 13)}px;
  font-weight: ${({ $head }) => ($head ? 'bold' : 'normal')};
`

const QuoteTab = styled.button`
  justify-content: center;
  height: 11px;
  padding-top: 11px;
  background: #333333;
  color: #c0c0c0;
  font-size: 12px;
`

export default App
